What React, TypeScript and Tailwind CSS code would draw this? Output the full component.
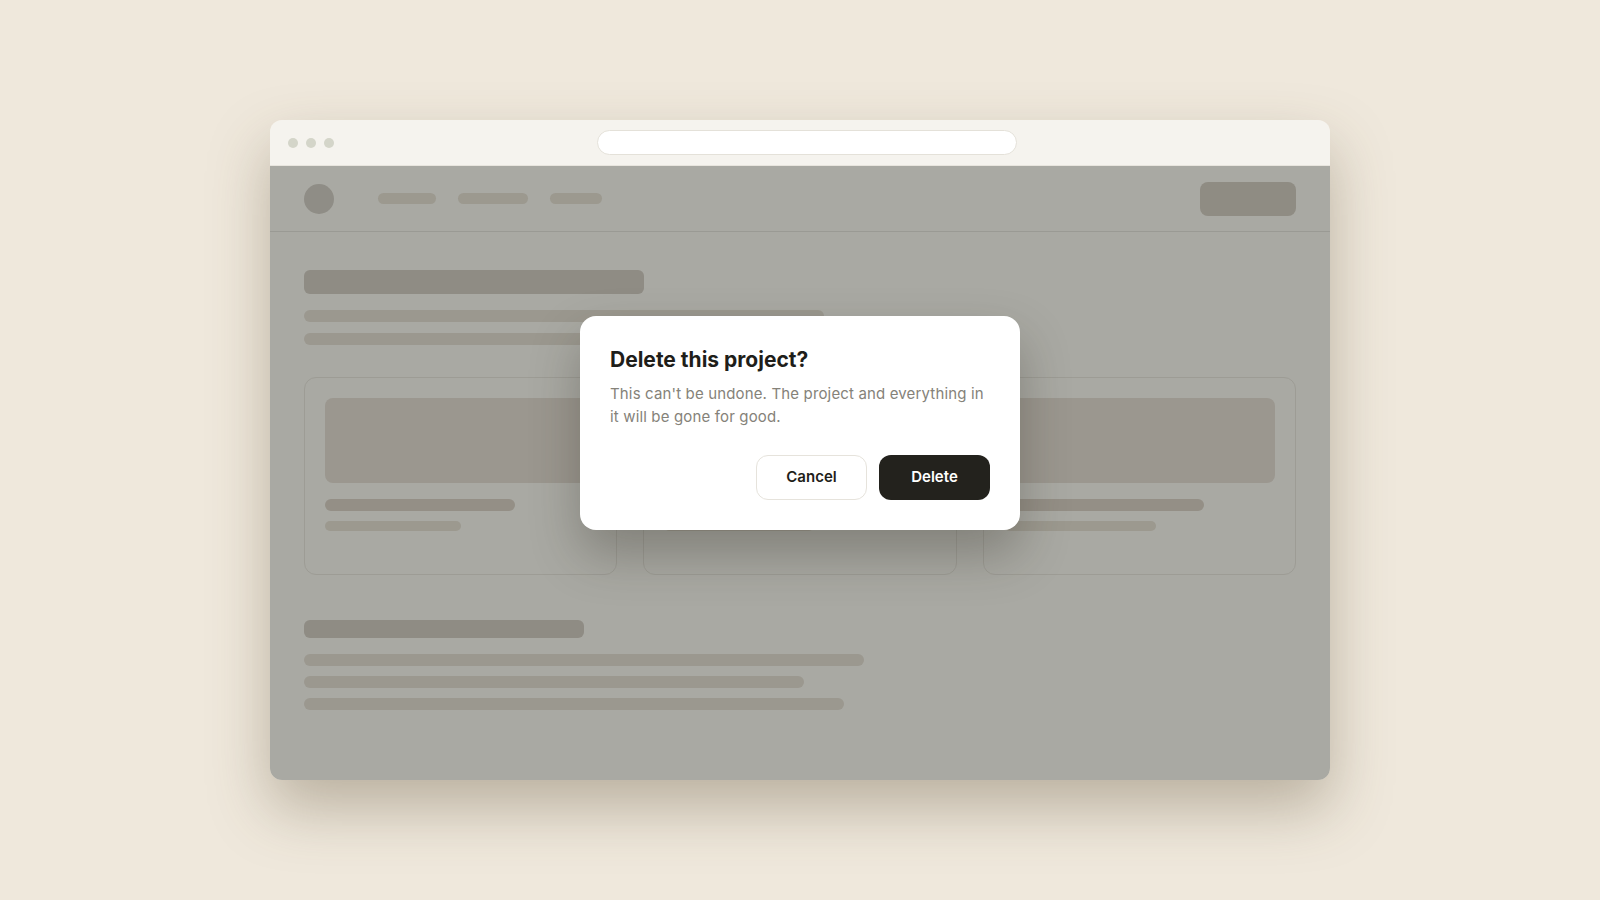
import React from "react";

const font = { fontFamily: "Inter, 'Noto Sans', sans-serif" };

function Card({ line1, line2 }: { line1: string; line2: string }) {
  return (
    <div className="h-[198px] rounded-xl border border-[#9d9c95] px-5 pt-5">
      <div className="h-[85px] rounded-lg bg-[#9b978f]" />
      <div className={`mt-4 h-3 rounded-full bg-[#948f86] ${line1}`} />
      <div className={`mt-[10px] h-[10px] rounded-full bg-[#9c998f] ${line2}`} />
    </div>
  );
}

function ConfirmDialog() {
  return (
    <div className="w-[440px] rounded-2xl bg-white p-[30px] shadow-[0_24px_50px_rgba(40,35,25,0.3)]">
      <h2 className="text-[21px] font-bold leading-7 text-[#1f1e1a]">Delete this project?</h2>
      <p className="mt-2 text-[15px] leading-[23px] tracking-[0.15px] text-[#858279]">
        This can't be undone. The project and everything in it will be gone for good.
      </p>
      <div className="mt-[27px] flex justify-end gap-3">
        <button
          type="button"
          className="h-[45px] w-[111px] rounded-xl border border-[#e6e3dc] bg-white text-[15px] font-semibold text-[#1f1e1a]"
        >
          Cancel
        </button>
        <button
          type="button"
          className="h-[45px] w-[111px] rounded-xl bg-[#23221d] text-[15px] font-semibold text-white"
        >
          Delete
        </button>
      </div>
    </div>
  );
}

export default function App() {
  return (
    <div className="flex h-[900px] w-full items-center justify-center bg-[#efe8dc]" style={font}>
      <div className="relative h-[660px] w-[1060px] overflow-hidden rounded-xl shadow-[0_28px_60px_rgba(90,75,50,0.35)]">
        {/* title bar */}
        <div className="flex h-[46px] items-center border-b border-[#e8e5de] bg-[#f5f3ee] px-[18px]">
          <div className="flex gap-2">
            <span className="h-[10px] w-[10px] rounded-full bg-[#d4d5c9]" />
            <span className="h-[10px] w-[10px] rounded-full bg-[#d4d5c9]" />
            <span className="h-[10px] w-[10px] rounded-full bg-[#d4d5c9]" />
          </div>
          <div className="ml-[263px] h-[25px] w-[420px] rounded-full border border-[#e4e1d9] bg-white" />
        </div>

        {/* page */}
        <div className="relative h-[614px] bg-[#a9a9a3]">
          <div className="flex h-[66px] items-center border-b border-[#9a9a94] px-[34px]">
            <div className="h-[30px] w-[30px] rounded-full bg-[#8f8d86]" />
            <div className="ml-[44px] flex gap-[22px]">
              <div className="h-[11px] w-[58px] rounded-full bg-[#9c998f]" />
              <div className="h-[11px] w-[70px] rounded-full bg-[#9c998f]" />
              <div className="h-[11px] w-[52px] rounded-full bg-[#9c998f]" />
            </div>
            <div className="ml-auto h-[34px] w-[96px] rounded-lg bg-[#8f8c83]" />
          </div>

          <div className="px-[34px] pt-[38px]">
            <div className="h-6 w-[340px] rounded-md bg-[#8f8c84]" />
            <div className="mt-4 h-3 w-[520px] rounded-full bg-[#9b988f]" />
            <div className="mt-[11px] h-3 w-[440px] rounded-full bg-[#9b988f]" />

            <div className="mt-8 grid grid-cols-3 gap-[26px]">
              <Card line1="w-[190px]" line2="w-[136px]" />
              <Card line1="w-[210px]" line2="w-[150px]" />
              <Card line1="w-[200px]" line2="w-[152px]" />
            </div>

            <div className="mt-[45px] h-[18px] w-[280px] rounded-md bg-[#8f8c84]" />
            <div className="mt-4 h-3 w-[560px] rounded-full bg-[#9b988f]" />
            <div className="mt-[10px] h-3 w-[500px] rounded-full bg-[#9b988f]" />
            <div className="mt-[10px] h-3 w-[540px] rounded-full bg-[#9b988f]" />
          </div>

          {/* modal layer */}
          <div className="absolute inset-0 flex items-start justify-center pt-[150px]">
            <ConfirmDialog />
          </div>
        </div>
      </div>
    </div>
  );
}
